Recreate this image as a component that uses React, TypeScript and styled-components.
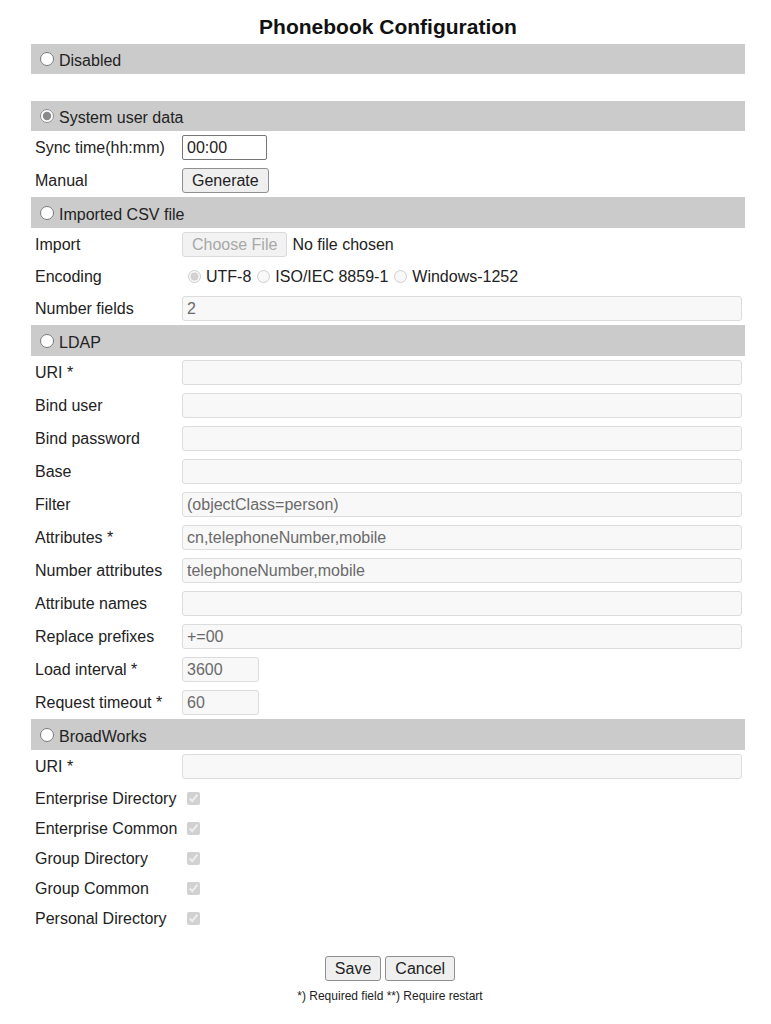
import React from "react";
import styled, { createGlobalStyle } from "styled-components";

const Global = createGlobalStyle`
  html, body { margin: 0; padding: 0; background: #fff; }
  body { font-family: "Liberation Sans", Arial, sans-serif; font-size: 16px; color: #222; }
`;

const Page = styled.div`
  width: 714px;
  margin-left: 31px;
  padding-top: 14px;
`;

const Title = styled.h1`
  margin: 0 0 5px;
  height: 25px;
  line-height: 25px;
  text-align: center;
  font-size: 21px;
  font-weight: bold;
  color: #111;
`;

const Grid = styled.div`
  display: grid;
  grid-template-columns: 151px 1fr;
`;

const SectionBar = styled.label<{ $h?: number }>`
  grid-column: 1 / -1;
  display: flex;
  align-items: center;
  height: ${(p) => p.$h ?? 30}px;
  background: #cbcbcb;
  padding: 4px 4px 0;
  box-sizing: border-box;
  cursor: default;
`;

const Spacer = styled.div`
  grid-column: 1 / -1;
  height: 27px;
`;

const Radio = styled.input.attrs({ type: "radio" })`
  width: 14px;
  height: 14px;
  margin: 0 5px 4px 5px;
  accent-color: #8a8a8a;
`;

const Label = styled.div<{ $h: number }>`
  height: ${(p) => p.$h}px;
  display: flex;
  align-items: center;
  padding-left: 4px;
  padding-top: 1px;
  box-sizing: border-box;
  white-space: nowrap;
`;

const Cell = styled.div<{ $h: number }>`
  height: ${(p) => p.$h}px;
  display: flex;
  align-items: center;
  padding-right: 3px;
  box-sizing: border-box;
`;

const TextInput = styled.input<{ $w?: number }>`
  box-sizing: border-box;
  height: 25px;
  width: ${(p) => (p.$w ? `${p.$w}px` : "100%")};
  font: inherit;
  font-size: 16px;
  padding: 1px 4px 0;
  border-radius: 3px;
  border: 1px solid #dcdcdc;
  background: #f8f8f8;
  color: #6a6a6a;
  outline: none;
  &:enabled {
    border: 1px solid #767676;
    border-radius: 2px;
    background: #fff;
    color: #222;
  }
`;

const Button = styled.button`
  box-sizing: border-box;
  height: 25px;
  font: inherit;
  font-size: 16px;
  padding: 0 9px;
  border: 1px solid #8f8f8f;
  border-radius: 3px;
  background: #efefef;
  color: #222;
  &:disabled {
    color: #a8a8a8;
    border-color: #dadada;
    background: #f2f2f2;
  }
`;

const FileText = styled.span`
  margin-left: 5px;
`;

const RadioGroup = styled.div`
  display: flex;
  align-items: center;
`;

const SmallRadio = styled.input.attrs({ type: "radio" })`
  width: 13px;
  height: 13px;
  margin: 0 5px 0 6px;
`;

const Check = styled.input.attrs({ type: "checkbox" })`
  width: 13px;
  height: 13px;
  margin: 0 0 0 5px;
`;

const Actions = styled.div`
  display: flex;
  justify-content: center;
  gap: 4px;
  margin-top: 23px;
  padding-left: 4px;
`;

const Note = styled.div`
  text-align: center;
  font-size: 12px;
  margin-top: 8px;
  padding-left: 4px;
`;

type Field = { label: string; value?: string; w?: number };

const ldap: Field[] = [
  { label: "URI *" },
  { label: "Bind user" },
  { label: "Bind password" },
  { label: "Base" },
  { label: "Filter", value: "(objectClass=person)" },
  { label: "Attributes *", value: "cn,telephoneNumber,mobile" },
  { label: "Number attributes", value: "telephoneNumber,mobile" },
  { label: "Attribute names" },
  { label: "Replace prefixes", value: "+=00" },
  { label: "Load interval *", value: "3600", w: 77 },
  { label: "Request timeout *", value: "60", w: 77 },
];

const bw = [
  "Enterprise Directory",
  "Enterprise Common",
  "Group Directory",
  "Group Common",
  "Personal Directory",
];

const FieldRow = ({ f }: { f: Field }) => (
  <>
    <Label $h={33}>{f.label}</Label>
    <Cell $h={33}>
      <TextInput disabled defaultValue={f.value ?? ""} $w={f.w} />
    </Cell>
  </>
);

export default function App() {
  return (
    <>
      <Global />
      <Page>
        <Title>Phonebook Configuration</Title>
        <Grid>
          <SectionBar>
            <Radio name="src" />
            Disabled
          </SectionBar>
          <Spacer />
          <SectionBar>
            <Radio name="src" defaultChecked />
            System user data
          </SectionBar>
          <Label $h={33}>Sync time(hh:mm)</Label>
          <Cell $h={33}>
            <TextInput defaultValue="00:00" $w={85} />
          </Cell>
          <Label $h={33}>Manual</Label>
          <Cell $h={33}>
            <Button>Generate</Button>
          </Cell>

          <SectionBar $h={31}>
            <Radio name="src" />
            Imported CSV file
          </SectionBar>
          <Label $h={33}>Import</Label>
          <Cell $h={33}>
            <Button disabled>Choose File</Button>
            <FileText>No file chosen</FileText>
          </Cell>
          <Label $h={31}>Encoding</Label>
          <Cell $h={31}>
            <RadioGroup>
              <SmallRadio name="enc" disabled defaultChecked />
              UTF-8
              <SmallRadio name="enc" disabled />
              ISO/IEC 8859-1
              <SmallRadio name="enc" disabled />
              Windows-1252
            </RadioGroup>
          </Cell>
          <FieldRow f={{ label: "Number fields", value: "2" }} />

          <SectionBar $h={31}>
            <Radio name="src" />
            LDAP
          </SectionBar>
          {ldap.map((f) => (
            <FieldRow key={f.label} f={f} />
          ))}

          <SectionBar $h={31}>
            <Radio name="src" />
            BroadWorks
          </SectionBar>
          <FieldRow f={{ label: "URI *" }} />
          {bw.map((b) => (
            <React.Fragment key={b}>
              <Label $h={30}>{b}</Label>
              <Cell $h={30}>
                <Check disabled defaultChecked />
              </Cell>
            </React.Fragment>
          ))}
        </Grid>
        <Actions>
          <Button>Save</Button>
          <Button>Cancel</Button>
        </Actions>
        <Note>*) Required field **) Require restart</Note>
      </Page>
    </>
  );
}
